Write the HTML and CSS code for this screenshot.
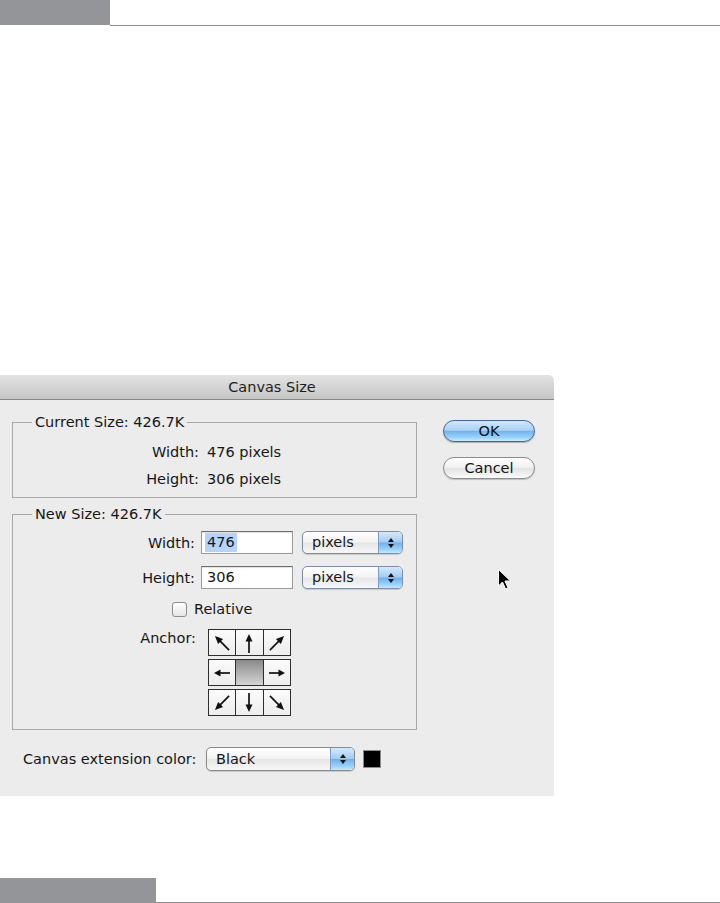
FILE: index.html
```html
<!DOCTYPE html>
<html>
<head>
<meta charset="utf-8">
<title>Canvas Size</title>
<link rel="stylesheet" href="styles.css">
</head>
<body>
<div class="page">
  <header class="bar top"><div class="tab"></div><div class="rule"></div></header>

  <div class="dialog">
    <div class="titlebar">Canvas Size</div>
    <div class="dbody">
      <div class="main">
        <fieldset class="group current">
          <legend>Current Size: 426.7K</legend>
          <div class="info-row"><span class="lbl">Width:</span><span class="val">476 pixels</span></div>
          <div class="info-row"><span class="lbl">Height:</span><span class="val">306 pixels</span></div>
        </fieldset>

        <fieldset class="group newsize">
          <legend>New Size: 426.7K</legend>
          <div class="field-row">
            <span class="lbl">Width:</span>
            <div class="input"><span class="sel">476</span></div>
            <div class="popup unit"><span class="ptext">pixels</span><span class="stepper"><svg width="8" height="12" viewBox="0 0 8 12"><polygon points="4,1 7,5 1,5" fill="#111"/><polygon points="4,11 7,7 1,7" fill="#111"/></svg></span></div>
          </div>
          <div class="field-row second">
            <span class="lbl">Height:</span>
            <div class="input"><span class="plain">306</span></div>
            <div class="popup unit"><span class="ptext">pixels</span><span class="stepper"><svg width="8" height="12" viewBox="0 0 8 12"><polygon points="4,1 7,5 1,5" fill="#111"/><polygon points="4,11 7,7 1,7" fill="#111"/></svg></span></div>
          </div>
          <div class="check-row"><span class="checkbox"></span><span>Relative</span></div>
          <div class="anchor-row">
            <span class="lbl">Anchor:</span>
            <div class="anchor">
              <div class="arow">
                <div class="cell"><svg width="24" height="24" viewBox="0 0 24 24"><g transform="rotate(-45 12 12)"><line x1="12" y1="22" x2="12" y2="7" stroke="#111" stroke-width="1.7"/><polygon points="12,2 8.5,10 15.5,10" fill="#111"/></g></svg></div>
                <div class="cell"><svg width="24" height="24" viewBox="0 0 24 24"><g><line x1="12" y1="22" x2="12" y2="7" stroke="#111" stroke-width="1.7"/><polygon points="12,3 8.5,10.5 15.5,10.5" fill="#111"/></g></svg></div>
                <div class="cell"><svg width="24" height="24" viewBox="0 0 24 24"><g transform="rotate(45 12 12)"><line x1="12" y1="22" x2="12" y2="7" stroke="#111" stroke-width="1.7"/><polygon points="12,2 8.5,10 15.5,10" fill="#111"/></g></svg></div>
              </div>
              <div class="arow">
                <div class="cell"><svg width="24" height="24" viewBox="0 0 24 24"><g transform="rotate(-90 12 12)"><line x1="12" y1="20" x2="12" y2="8" stroke="#111" stroke-width="1.7"/><polygon points="12,4 8.5,10.5 15.5,10.5" fill="#111"/></g></svg></div>
                <div class="cell center"></div>
                <div class="cell"><svg width="24" height="24" viewBox="0 0 24 24"><g transform="rotate(90 12 12)"><line x1="12" y1="20" x2="12" y2="8" stroke="#111" stroke-width="1.7"/><polygon points="12,4 8.5,10.5 15.5,10.5" fill="#111"/></g></svg></div>
              </div>
              <div class="arow">
                <div class="cell"><svg width="24" height="24" viewBox="0 0 24 24"><g transform="rotate(-135 12 12)"><line x1="12" y1="22" x2="12" y2="7" stroke="#111" stroke-width="1.7"/><polygon points="12,2 8.5,10 15.5,10" fill="#111"/></g></svg></div>
                <div class="cell"><svg width="24" height="24" viewBox="0 0 24 24"><g transform="rotate(180 12 12)"><line x1="12" y1="22" x2="12" y2="7" stroke="#111" stroke-width="1.7"/><polygon points="12,3 8.5,10.5 15.5,10.5" fill="#111"/></g></svg></div>
                <div class="cell"><svg width="24" height="24" viewBox="0 0 24 24"><g transform="rotate(135 12 12)"><line x1="12" y1="22" x2="12" y2="7" stroke="#111" stroke-width="1.7"/><polygon points="12,2 8.5,10 15.5,10" fill="#111"/></g></svg></div>
              </div>
            </div>
          </div>
        </fieldset>

        <div class="ext-row">
          <span class="ext-lbl">Canvas extension color:</span>
          <div class="popup color"><span class="ptext">Black</span><span class="stepper"><svg width="8" height="12" viewBox="0 0 8 12"><polygon points="4,1 7,5 1,5" fill="#111"/><polygon points="4,11 7,7 1,7" fill="#111"/></svg></span></div>
          <span class="swatch"></span>
        </div>
      </div>

      <div class="buttons">
        <button class="btn ok">OK</button>
        <button class="btn cancel">Cancel</button>
      </div>
    </div>
  </div>

  <footer class="bar bottom"><div class="tab"></div><div class="rule"></div></footer>

  <svg class="cursor" width="15" height="23" viewBox="0 0 15 23"><path d="M1.5 1.5 L1.5 18 L5.5 14 L8.6 21 L11 20 L8 13 L13.5 13 Z" fill="#000" stroke="#fff" stroke-width="1" stroke-linejoin="round"/></svg>
</div>
</body>
</html>
```
FILE: styles.css
```css
* { box-sizing: border-box; }
html, body { margin: 0; padding: 0; }
body {
  background: #fff;
  font-family: "DejaVu Sans", "Liberation Sans", sans-serif;
  font-size: 14.5px;
  color: #161616;
}
.page { position: relative; width: 720px; height: 903px; overflow: hidden; }

/* page header / footer bars */
.bar { display: flex; height: 26px; }
.bar .tab { background: #939598; }
.bar.top .tab { width: 110px; height: 25px; }
.bar.top .rule { flex: 1; height: 26px; border-bottom: 1px solid #8c8c8c; }
.bar.bottom { margin-top: 82px; }
.bar.bottom .tab { width: 156px; height: 26px; }
.bar.bottom .rule { flex: 1; height: 25px; border-bottom: 1px solid #8c8c8c; }

/* dialog */
.dialog {
  width: 554px;
  margin-top: 349px;
  background: #ececec;
  border-top-right-radius: 6px;
  overflow: hidden;
}
.titlebar {
  height: 25px;
  display: flex;
  align-items: center;
  justify-content: center;
  padding-right: 10px;
  background: linear-gradient(#e3e3e3, #c6c6c6);
  border-bottom: 1px solid #8a8a8a;
  color: #1e1e1e;
}
.dbody { display: flex; padding: 13px 0 25px 0; }
.main { margin-left: 12px; width: 405px; }

fieldset.group {
  margin: 0;
  border: 1px solid #a8a8a8;
  min-width: 0;
}
fieldset.group legend {
  margin-left: 19px;
  padding: 0 3px;
  line-height: 18px;
}
fieldset.current { padding: 12px 0 9px 0; }
fieldset.newsize { margin-top: 7px; padding: 8px 0 13px 0; }

.lbl { text-align: right; flex: none; }

.info-row { display: flex; height: 18px; line-height: 18px; }
.info-row + .info-row { margin-top: 9px; }
.info-row .lbl { width: 186px; margin-right: 8px; }

.field-row { display: flex; height: 23px; align-items: center; }
.field-row.second { margin-top: 12px; }
.field-row .lbl { width: 182px; margin-right: 6px; }

.input {
  width: 92px;
  height: 23px;
  border: 1px solid #9a9a9a;
  border-top-color: #6e6e6e;
  background: #fff;
  box-shadow: inset 0 1px 1px rgba(0,0,0,0.12);
  padding: 1px 0 0 3px;
  line-height: 19px;
}
.sel { display: inline-block; background: #b5d4fc; padding: 0 2px 0 2px; line-height: 19px; }
.plain { padding-left: 2px; }

.popup {
  display: flex;
  height: 23px;
  border: 1px solid #8a8a8a;
  border-radius: 5px;
  background: linear-gradient(#ffffff 0%, #f3f3f3 48%, #e6e6e6 52%, #f7f7f7 100%);
  box-shadow: 0 1px 1px rgba(0,0,0,0.15);
  overflow: hidden;
}
.popup .ptext { flex: 1; padding-left: 9px; line-height: 21px; }
.popup .stepper {
  width: 24px;
  display: flex;
  align-items: center;
  justify-content: center;
  border-left: 1px solid #7d9ccc;
  background: linear-gradient(#d5e9fb 0%, #a4ccf1 48%, #70b0ea 52%, #9fd4fa 85%, #c3eafd 100%);
}
.unit { width: 101px; margin-left: 9px; border-color: #7f8ea4; }

.check-row { display: flex; align-items: center; height: 18px; margin-top: 11px; padding-left: 159px; }
.checkbox {
  width: 15px;
  height: 15px;
  margin-right: 7px;
  border: 1px solid #8d8d8d;
  border-radius: 3px;
  background: linear-gradient(#ffffff, #e4e4e4);
}

.anchor-row { display: flex; margin-top: 11px; }
.anchor-row .lbl { width: 183px; margin-right: 12px; line-height: 18px; }
.anchor { display: flex; flex-direction: column; gap: 3px; width: 83px; }
.arow { display: flex; height: 27px; border: 1px solid #2e2e2e; }
.cell {
  flex: 1;
  display: flex;
  align-items: center;
  justify-content: center;
  background: linear-gradient(#fbfbfb, #ededed);
}
.cell + .cell { border-left: 1px solid #2e2e2e; }
.cell.center { background: linear-gradient(#8a8a8a, #d4d4d4); }

.ext-row { display: flex; align-items: center; margin-top: 17px; height: 24px; padding-left: 11px; }
.ext-lbl { width: 183px; flex: none; }
.color { width: 149px; height: 24px; }
.color .ptext { line-height: 22px; }
.swatch { width: 18px; height: 18px; margin-left: 8px; background: #000; border: 1px solid #8a8a8a; }

/* buttons */
.buttons {
  margin-left: 26px;
  margin-top: 7px;
  width: 92px;
  display: flex;
  flex-direction: column;
  gap: 15px;
}
.btn {
  height: 22px;
  border-radius: 11px;
  font: inherit;
  color: #111;
  padding: 0;
  line-height: 20px;
  text-align: center;
}
.ok {
  border: 1px solid #44659a;
  background: linear-gradient(#d2e8fa 0%, #a9d2f4 46%, #74b4ec 52%, #9fd5fb 85%, #c8ecfe 100%);
  box-shadow: 0 1px 1px rgba(0,0,0,0.25);
}
.cancel {
  border: 1px solid #8c8c8c;
  background: linear-gradient(#ffffff 0%, #f2f2f2 46%, #e3e3e3 54%, #fbfbfb 100%);
  box-shadow: 0 1px 1px rgba(0,0,0,0.2);
}

.cursor { position: absolute; left: 497px; top: 568px; }
```
